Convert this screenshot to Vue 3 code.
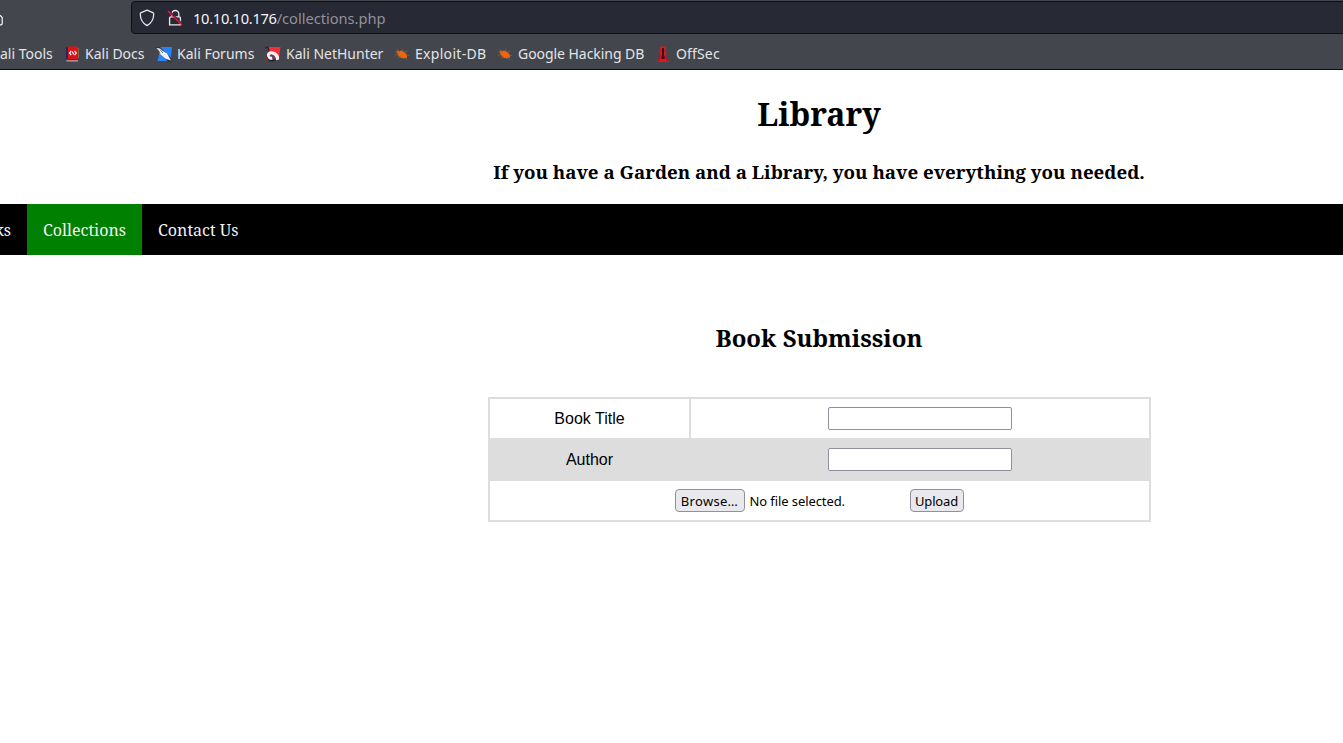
<script setup>
const bookmarks = [
  { label: 'Kali Docs', icon: 'docs', width: 92, text: 'docs' },
  { label: 'Kali Forums', icon: 'forums', width: 109, text: 'forums' },
  { label: 'Kali NetHunter', icon: 'hunter', width: 129, text: 'hunter' },
  { label: 'Exploit-DB', icon: 'bug', width: 103, text: 'exploit' },
  { label: 'Google Hacking DB', icon: 'bug', width: 158, text: 'google' },
  { label: 'OffSec', icon: 'offsec', width: 80, text: 'offsec' },
]
</script>

<template>
  <div class="screen">
    <header class="browser">
      <div class="toolbar">
        <div class="toolbar-left">
          <svg class="home" width="4" height="16" viewBox="0 0 4 16"><path d="M0 4.200L2.200 6.500V12.500q0 1.300-1.300 1.300H0" fill="none" stroke="#fbfbfe" stroke-width="1.2" /></svg>
        </div>
        <div class="urlbar">
          <svg class="shield" width="16" height="18" viewBox="0 0 16 18"><path d="M8 1.2L13.8 3.6Q14.8 4 14.7 5.2C14.6 10.4 12.8 14 8 16.6C3.2 14 1.4 10.4 1.3 5.2Q1.2 4 2.2 3.6Z" fill="none" stroke="#e8e8ec" stroke-width="1.25" stroke-linejoin="round" /></svg>
          <svg class="lock" width="16" height="18" viewBox="0 0 16 18"><path d="M4.800 7V5a3.500 3.500 0 0 1 7 0V7.800H12.300Q13.400 7.800 13.400 9V15.800H2.600V9Q2.600 7.800 4 7.800H12" fill="none" stroke="#e8e8ec" stroke-width="1.35" /><path d="M2.300 2L15.700 15.500" stroke="#272935" stroke-width="1.5" /><path d="M1 2L15 16" stroke="#f0123e" stroke-width="1.5" /></svg>
          <span class="url"><b>10.10.10.176</b>/collections.php</span>
        </div>
      </div>
      <div class="bookmarks">
        <span class="first">ali Tools</span>
        <span v-for="b in bookmarks" :key="b.label" class="bookmark" :style="{ width: b.width + 'px' }">
          <svg class="icon" width="16" height="16" viewBox="0 0 16 16">
            <g v-if="b.icon === 'docs'">
              <path d="M2 1H5V15H2Z" fill="#252a55" /><path d="M4 0.500H14V13H4Z" fill="#dc1216" /><path d="M2.500 13.500H14V15.500H2.500Z" fill="#b9a6a5" /><path d="M3 13H14V14.200H3Z" fill="#a40c16" /><path d="M14.500 2V12" stroke="#8c6045" /><path d="M7.300 5L5.400 7L7.300 9M10.500 5L12.400 7L10.500 9M8.300 5.500L9.700 8.500" fill="none" stroke="#fff" stroke-width="1.1" />
            </g>
            <g v-else-if="b.icon === 'forums'">
              <path d="M3 1H16L14.500 15H1.500L3 9Z" fill="#2684f5" /><path d="M0 1H4L15 12L16 16H12Z" fill="#30343a" /><path d="M0.500 2L4 2.500L7 5L11 7.500L15 14.500L10 13L4.500 8.500L4 6Z" fill="#f1f2ed" /><path d="M4 3.500L7 7" fill="none" stroke="#4a5057" stroke-width=".8" />
            </g>
            <g v-else-if="b.icon === 'hunter'">
              <path d="M3 1H15.500L14 12L9 7L3 5Z" fill="#f52f38" /><path d="M0 2L3 1L4 5M1 11L5 15L13 14" fill="none" stroke="#25252c" stroke-width="1.300" /><path d="M2.500 11C0.500 7.500 4 4.500 8 5.500C12 6.200 15 10 14 13.500L11 14.500C11.500 11 8 7.500 5.500 8.800C4 9.600 4.500 11 7 10.800L7.500 13.500C5 14.500 3.200 13 2.500 11Z" fill="#f3f3f3" /><path d="M5 9.500Q8 8 10 13M0.500 11L3 14.500" fill="none" stroke="#c81b40" stroke-width="1.2" />
            </g>
            <g v-else-if="b.icon === 'bug'">
              <path d="M2.500 4.500L5 5L7 4.500L11 6.500L13 9V11.500L10 12.500L6 11.500L3.500 8.500Z" fill="#ed650c" /><path d="M0.500 6H5M1 9.500L5 8M3.500 12L7 10M8 3L10 6M10 6.500L13.500 5M12 9.500H15M11 11L13 14M3 3L6 6" stroke="#a8582b" stroke-width=".65" />
            </g>
            <g v-else>
              <path d="M5 0.500H11V8.500L14 16H2L5 8.500Z" fill="#db171f" /><path d="M8 2V13M6.800 5H9.200M6.200 11.500H9.800" stroke="#301117" stroke-width="1.8" /><path d="M5.500 9L3.500 15M10.500 9L12.500 15" stroke="#a31119" />
            </g>
          </svg>
          <span :class="b.text">{{ b.label }}</span>
        </span>
      </div>
    </header>
    <main>
      <div class="heading">
        <h1>Library</h1>
        <h3>If you have a Garden and a Library, you have everything you needed.</h3>
      </div>
      <nav>
        <a class="partial">ks</a>
        <a class="active">Collections</a>
        <a>Contact Us</a>
      </nav>
      <section>
        <h2>Book Submission</h2>
        <div class="form">
          <div class="row">
            <label>Book Title</label>
            <div class="field"><input type="text" /></div>
          </div>
          <div class="row author">
            <label>Author</label>
            <div class="field"><input type="text" /></div>
          </div>
          <div class="files">
            <button class="browse">Browse…</button>
            <span class="status">No file selected.</span>
            <button class="upload">Upload</button>
          </div>
        </div>
      </section>
    </main>
  </div>
</template>

<style>
html, body { margin: 0; background: #fff; overflow: hidden; }
</style>

<style scoped>
.screen { width: 1343px; height: 743px; overflow: hidden; background: #fff; color: #000; font-family: "Noto Serif", "DejaVu Serif Condensed", "DejaVu Serif", serif; }
.screen * { box-sizing: border-box; }
.browser { height: 70px; background: #43464d; border-bottom: 1px solid #0c0c0d; font-family: "Noto Sans", sans-serif; color: #e4e4e6; }
.toolbar { display: flex; height: 36px; padding-top: 1px; }
.toolbar-left { width: 131px; flex: none; padding-top: 10px; }
.home { display: block; }
.urlbar { display: flex; align-items: center; width: 1220px; flex: none; height: 33px; background: #272935; border: 1px solid #0d0e13; border-radius: 4px; padding-left: 7px; }
svg { flex: none; display: block; }
.lock { margin-left: 12px; }
.url { margin-left: 10px; font-size: 14.67px; line-height: 20px; color: #91929a; white-space: nowrap; letter-spacing: -0.03px; }
.url b { color: #f4f4f7; font-weight: 400; letter-spacing: -0.3px; }
.bookmarks { display: flex; align-items: center; height: 33px; padding-top: 3px; font-size: 14px; line-height: 20px; white-space: nowrap; }
.first { width: 64px; flex: none; }
.bookmark { display: flex; align-items: center; gap: 5px; flex: none; }
.bookmark > span, .first { margin-top: -1px; }
.exploit { letter-spacing: 0.3px; }
.google { letter-spacing: -0.05px; }
.offsec { letter-spacing: 0.15px; }
.heading { height: 134px; text-align: center; padding: 21px 0 0 295px; }
h1, h2, h3 { margin: 0; white-space: nowrap; }
h1 { font-size: 32px; line-height: 46px; }
h3 { font-size: 18.72px; line-height: 26px; margin-top: 22px; }
nav { display: flex; height: 51px; background: #000; color: #f3f3f3; font-size: 16px; line-height: 53px; white-space: nowrap; }
.partial { width: 27px; display: flex; justify-content: flex-end; padding-right: 16px; }
.active { width: 115px; background: #008000; margin-right: 16px; padding-left: 16px; }
section { padding-left: 295px; display: flex; flex-direction: column; align-items: center; }
h2 { margin-top: 66px; font-size: 24px; line-height: 34px; }
.form { width: 663px; height: 125px; margin-top: 42px; border: 2px solid #ddd; font-family: "Liberation Sans", Arial, sans-serif; font-size: 16px; }
.row { display: grid; grid-template-columns: 201px 1fr; height: 39px; }
label { display: flex; align-items: center; justify-content: center; border-right: 2px solid #ddd; padding-left: 1px; }
.field { display: flex; align-items: center; justify-content: center; }
input { width: 184px; height: 23px; border: 1px solid #8f8f9d; border-radius: 2px; background: #fff; margin: 0; padding: 0; }
.author { height: 43px; background: #ddd; }
.files { height: 39px; display: flex; align-items: center; padding-left: 185px; font-family: "Noto Sans", sans-serif; font-size: 13px; }
button { height: 23px; padding: 1px 0 0; margin: 0; border: 1px solid #8f8f9d; border-radius: 4px; background: #e9e9ed; color: #000; font: 13px/20px "Noto Sans", sans-serif; }
.browse { width: 70px; letter-spacing: 0.3px; }
.status { width: 160px; margin-left: 5px; white-space: nowrap; letter-spacing: -0.09px; }
.upload { width: 54px; letter-spacing: -0.15px; }
</style>
